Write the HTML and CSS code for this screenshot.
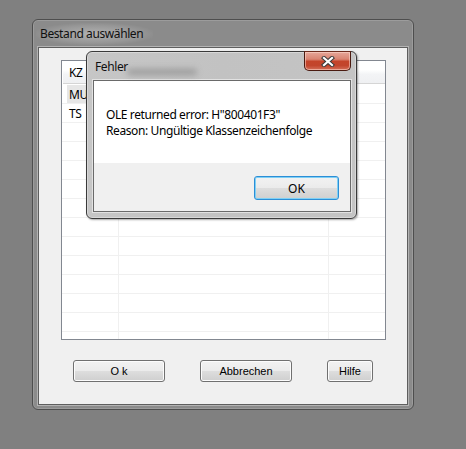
FILE: index.html
```html
<!DOCTYPE html>
<html lang="de">
<head>
<meta charset="utf-8">
<title>Bestand auswählen</title>
<link rel="stylesheet" href="styles.css">
</head>
<body>
<div class="window">
  <div class="titlebar"><span class="title">Bestand auswählen</span></div>
  <div class="client">
    <div class="list">
      <div class="row header">
        <div class="c c1">KZ</div><div class="c c2"></div><div class="c c3"></div>
      </div>
      <div class="rows">
        <div class="row"><div class="c c1"><span class="sel">MU</span></div><div class="c c2"></div><div class="c c3"></div></div>
        <div class="row"><div class="c c1"><span class="txt">TS</span></div><div class="c c2"></div><div class="c c3"></div></div>
        <div class="row"><div class="c c1"></div><div class="c c2"></div><div class="c c3"></div></div>
        <div class="row"><div class="c c1"></div><div class="c c2"></div><div class="c c3"></div></div>
        <div class="row"><div class="c c1"></div><div class="c c2"></div><div class="c c3"></div></div>
        <div class="row"><div class="c c1"></div><div class="c c2"></div><div class="c c3"></div></div>
        <div class="row"><div class="c c1"></div><div class="c c2"></div><div class="c c3"></div></div>
        <div class="row"><div class="c c1"></div><div class="c c2"></div><div class="c c3"></div></div>
        <div class="row"><div class="c c1"></div><div class="c c2"></div><div class="c c3"></div></div>
        <div class="row"><div class="c c1"></div><div class="c c2"></div><div class="c c3"></div></div>
        <div class="row"><div class="c c1"></div><div class="c c2"></div><div class="c c3"></div></div>
        <div class="row"><div class="c c1"></div><div class="c c2"></div><div class="c c3"></div></div>
        <div class="row"><div class="c c1"></div><div class="c c2"></div><div class="c c3"></div></div>
        <div class="row"><div class="c c1"></div><div class="c c2"></div><div class="c c3"></div></div>
      </div>
    </div>
    <div class="buttons">
      <button class="btn wide">O k</button>
      <button class="btn wide">Abbrechen</button>
      <button class="btn narrow">Hilfe</button>
    </div>
  </div>
</div>

<div class="dialog">
  <div class="dtitlebar">
    <span class="dtitle">Fehler</span>
    <span class="ghost"></span>
  </div>
  <div class="closebtn">
    <svg width="14" height="11" viewBox="0 0 14 11">
      <path d="M3 2 L11 9 M11 2 L3 9" stroke="#3b3b3b" stroke-width="4.2" stroke-linecap="square" fill="none"/>
      <path d="M3 2 L11 9 M11 2 L3 9" stroke="#ffffff" stroke-width="2.2" stroke-linecap="square" fill="none"/>
    </svg>
  </div>
  <div class="dclient">
    <div class="message">
      <div>OLE returned error: H"800401F3"</div>
      <div>Reason: Ungültige Klassenzeichenfolge</div>
    </div>
    <div class="dfooter">
      <button class="okbtn">OK</button>
    </div>
  </div>
</div>
</body>
</html>
```
FILE: styles.css
```css
* { box-sizing: border-box; }
html, body { margin: 0; }
body {
  width: 466px;
  height: 449px;
  overflow: hidden;
  background: #808080;
  padding: 19px 0 0 32px;
  font-family: "Noto Sans", "Open Sans", sans-serif;
  font-size: 12px;
  letter-spacing: -0.4px;
  color: #000;
}

.window {
  width: 382px;
  height: 391px;
  border: 1px solid #4e4e4e;
  border-radius: 6px;
  background: #8b8b8b;
  padding: 0 5px 4px 5px;
  box-shadow: inset 0 0 0 1px #9c9c9c;
}
.titlebar {
  height: 27px;
  display: flex;
  align-items: center;
  padding-left: 2px;
}
.title {
  color: #101010;
  font-size: 12px;
  background: radial-gradient(ellipse at center, rgba(190,190,190,0.75) 0%, rgba(170,170,170,0.4) 55%, rgba(139,139,139,0) 75%);
  padding: 2px 10px 3px 4px;
  margin-left: -4px;
}

.client {
  width: 370px;
  height: 358px;
  background: #f0f0f0;
  border: 1px solid #5e5e5e;
  box-shadow: 0 0 0 1px #b3b3b3;
  padding: 12px 0 0 22px;
  display: flex;
  flex-direction: column;
}

.list {
  width: 325px;
  height: 280px;
  border: 1px solid #828790;
  background: #fff;
  overflow: hidden;
}
.row {
  display: flex;
  height: 19px;
  border-bottom: 1px solid #f0f0f0;
}
.rows { padding-top: 1px; }
.row.header {
  height: 23px;
  margin-left: 1px;
  border-bottom: 1px solid #d5d5d5;
  background: linear-gradient(#ffffff 0%, #ffffff 40%, #f3f4f6 60%, #eff0f2 100%);
}
.c {
  display: flex;
  align-items: center;
  white-space: nowrap;
  overflow: hidden;
}
.c1 { width: 57px; border-right: 1px solid #f0f0f0; }
.c2 { width: 210px; border-right: 1px solid #f0f0f0; }
.c3 { flex: 1; }
.header .c1 { width: 56px; padding-left: 6px; }
.header .c { border-right: none; }
.sel {
  margin-left: 5px;
  padding-left: 2px;
  width: 40px;
  height: 18px;
  background: #e6e6e6;
  display: flex;
  align-items: center;
}
.txt { padding-left: 7px; }

.buttons {
  display: flex;
  gap: 35px;
  margin-top: 20px;
  padding-left: 12px;
}
.btn {
  height: 22px;
  border: 1px solid #707070;
  border-radius: 3px;
  background: linear-gradient(#f2f2f2 0%, #ebebeb 48%, #dddddd 52%, #cfcfcf 100%);
  box-shadow: inset 0 0 0 1px #fcfcfc;
  font-family: "Liberation Sans", Arial, sans-serif;
  font-size: 11px;
  letter-spacing: 0;
  color: #000;
  padding: 0;
}
.wide { width: 92px; }
.narrow { width: 46px; }

.dialog {
  position: absolute;
  left: 86px;
  top: 51px;
  width: 271px;
  height: 168px;
  border: 1px solid #3a3a3a;
  border-radius: 6px;
  background: linear-gradient(90deg, #c6c6c6 0%, #c2c2c2 50%, #c4c4c4 100%);
  padding: 0 5px 6px 6px;
  box-shadow: inset 0 0 0 1px #d8d8d8, 1px 1px 2px rgba(0,0,0,0.35);
}
.dtitlebar {
  height: 28px;
  display: flex;
  align-items: center;
  padding-left: 2px;
  position: relative;
}
.dtitle {
  color: #101010;
  font-size: 12px;
  position: relative;
  z-index: 1;
}
.ghost {
  position: absolute;
  left: 34px;
  top: 17px;
  width: 70px;
  height: 6px;
  background: #9a9a9a;
  filter: blur(3px);
  border-radius: 3px;
}
.closebtn {
  position: absolute;
  left: 217px;
  top: -1px;
  width: 47px;
  height: 20px;
  border: 1px solid #4a1a10;
  border-top-color: #6b2a1c;
  border-radius: 0 0 5px 5px;
  background: linear-gradient(#e6a799 0%, #d98472 40%, #c4442a 52%, #c2452c 75%, #d4705a 100%);
  box-shadow: inset 0 0 0 1px rgba(255,220,210,0.55);
  display: flex;
  align-items: center;
  justify-content: center;
}
.closebtn svg { display: block; }

.dclient {
  width: 258px;
  height: 132px;
  border: 1px solid #6a6a6a;
  box-shadow: 0 0 0 1px #e2e2e2;
  background: #f0f0f0;
  display: flex;
  flex-direction: column;
}
.message {
  height: 82px;
  background: #fff;
  padding: 26px 0 0 12px;
  line-height: 16px;
  color: #000;
}
.dfooter {
  flex: 1;
  display: flex;
  justify-content: flex-end;
  align-items: flex-start;
  padding: 13px 11px 0 0;
}
.okbtn {
  width: 85px;
  height: 24px;
  border: 1px solid #2c8ed6;
  border-radius: 3px;
  background: linear-gradient(#f2f2f2 0%, #ebebeb 48%, #dddddd 52%, #cfcfcf 100%);
  box-shadow: inset 0 0 0 1px #7fd0f5;
  font-family: "Noto Sans", "Open Sans", sans-serif;
  font-size: 12px;
  letter-spacing: 0;
  color: #000;
  padding: 0;
}
```
